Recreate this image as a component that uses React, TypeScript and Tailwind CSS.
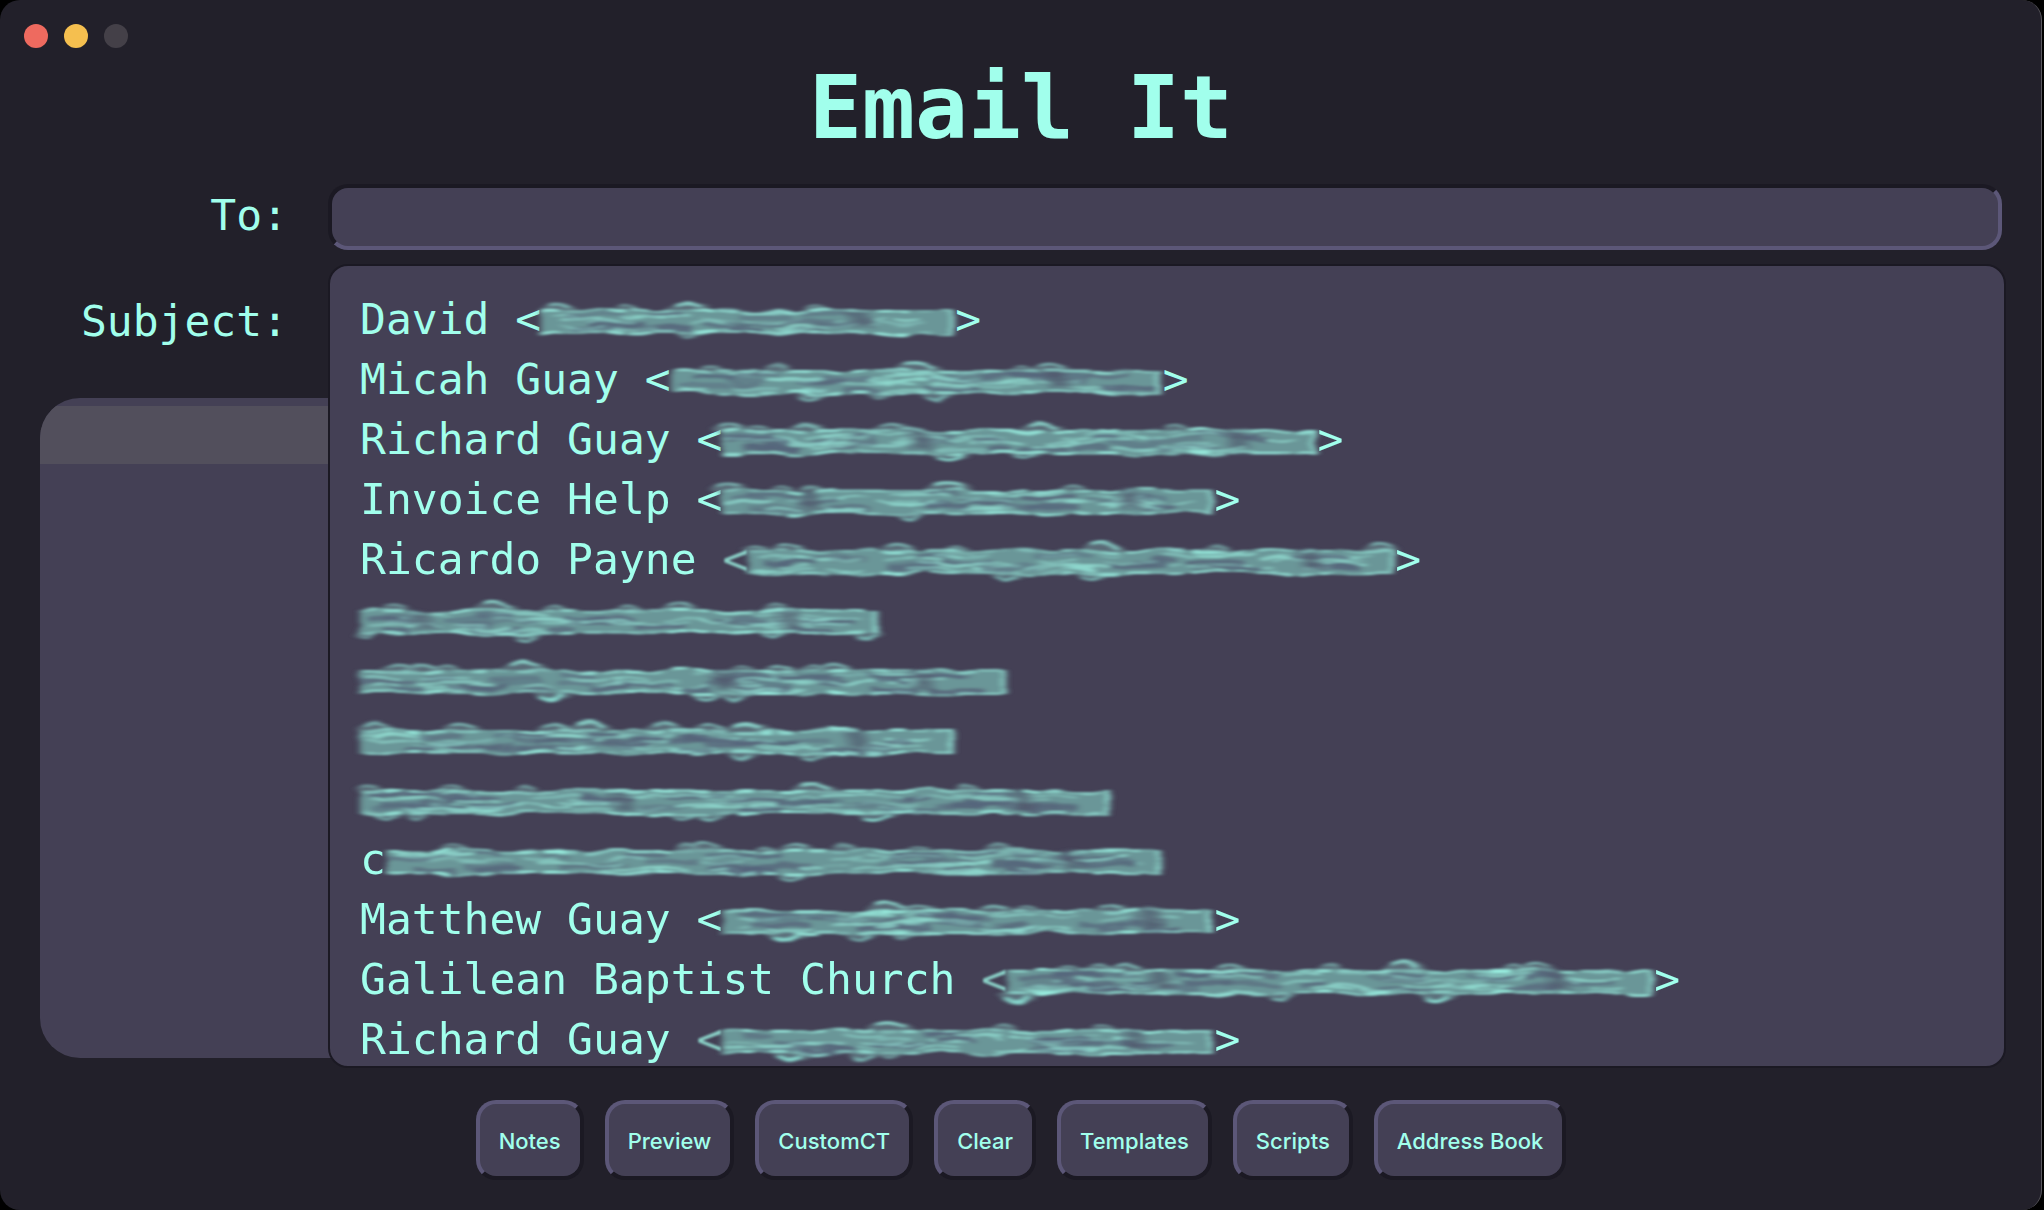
type Smear = {
  /** number of characters covered */
  chars: number;
  /** lumps above the band: [x, strength 1-3] */
  up: [number, number][];
  /** lumps below the band */
  down: [number, number][];
  /** darker breaks in the band */
  gaps: number[];
};

type Contact = {
  name: string;
  open?: 'sharp' | 'soft';
  close?: boolean;
  smear: Smear;
};

const CELL = 25.88;

const contacts: Contact[] = [
  {
    name: 'David ', open: 'sharp', close: true,
    smear: { chars: 16, up: [[20, 2], [86, 1], [147, 3], [274, 1]], down: [[147, 1]], gaps: [316] },
  },
  {
    name: 'Micah Guay ', open: 'sharp', close: true,
    smear: { chars: 19, up: [[39, 1], [106, 1], [248, 3], [352, 1], [381, 2]], down: [[139, 2], [206, 1], [266, 2]], gaps: [384] },
  },
  {
    name: 'Richard Guay ', open: 'sharp', close: true,
    smear: { chars: 23, up: [[8, 2], [37, 1], [85, 2], [169, 2], [321, 3], [454, 1]], down: [[229, 3], [305, 2]], gaps: [194, 512] },
  },
  {
    name: 'Invoice Help ', open: 'sharp', close: true,
    smear: { chars: 19, up: [[5, 2], [62, 1], [89, 1], [227, 3], [351, 1]], down: [[188, 2]], gaps: [85, 405] },
  },
  {
    name: 'Ricardo Payne ', open: 'soft', close: true,
    smear: { chars: 25, up: [[8, 1], [40, 2], [151, 2], [210, 1], [358, 3], [469, 1], [632, 2]], down: [[260, 2], [344, 2]], gaps: [559] },
  },
  {
    name: '',
    smear: { chars: 20, up: [[36, 1], [137, 3], [194, 1], [269, 1], [319, 2], [416, 1]], down: [[7, 1], [168, 2], [414, 2], [506, 2]], gaps: [60, 426] },
  },
  {
    name: '',
    smear: { chars: 25, up: [[39, 2], [64, 2], [87, 1], [164, 3], [382, 1], [422, 2], [453, 1], [474, 2]], down: [[192, 3], [349, 2], [374, 2]], gaps: [362, 560] },
  },
  {
    name: '',
    smear: { chars: 23, up: [[15, 2], [102, 2], [194, 2], [229, 3], [305, 2], [351, 2], [386, 3]], down: [[384, 2], [455, 2]], gaps: [493] },
  },
  {
    name: '',
    smear: { chars: 29, up: [[9, 1], [93, 1], [168, 1], [455, 3], [608, 1]], down: [[26, 2], [56, 1], [324, 2], [351, 2], [520, 3]], gaps: [259, 660] },
  },
  {
    name: 'c',
    smear: { chars: 30, up: [[67, 1], [302, 1], [321, 2], [379, 1], [409, 2], [459, 1], [534, 1], [611, 1]], down: [[406, 2]], gaps: [683] },
  },
  {
    name: 'Matthew Guay ', open: 'sharp', close: true,
    smear: { chars: 19, up: [[168, 3], [197, 2], [273, 2], [306, 1], [388, 2]], down: [[65, 3], [139, 2], [179, 1]], gaps: [426] },
  },
  {
    name: 'Galilean Baptist Church ', open: 'soft', close: true,
    smear: { chars: 25, up: [[61, 1], [94, 1], [119, 2], [222, 2], [324, 1], [396, 3], [507, 1], [530, 2]], down: [[12, 3], [275, 2], [429, 3]], gaps: [150, 547] },
  },
  {
    name: 'Richard Guay ', open: 'soft', close: true,
    smear: { chars: 19, up: [[168, 3], [282, 1], [382, 1]], down: [[70, 3], [141, 2], [166, 1]], gaps: [410] },
  },
];

const actions = ['Notes', 'Preview', 'CustomCT', 'Clear', 'Templates', 'Scripts', 'Address Book'];

function makeRandom(seed: number) {
  let s = seed * 7919 + 13;
  return () => {
    s = (s * 16807) % 2147483647;
    return s / 2147483647;
  };
}

/** A hand-smudged strip hiding an address. */
function Smudge({ smear, seed }: { smear: Smear; seed: number }) {
  const width = Math.round(smear.chars * CELL);
  const rand = makeRandom(seed + 1);
  const streaks = Array.from({ length: Math.round(width / 9) }, () => {
    const x = rand() * (width - 60);
    return {
      x,
      y: 25 + rand() * 17,
      len: 24 + rand() * 36,
      tilt: (rand() - 0.5) * 10,
      light: rand() > 0.45,
      alpha: 0.35 + rand() * 0.5,
    };
  });
  const edges = Array.from({ length: Math.round(width / 22) }, (_, i) => ({
    x: i * 22 + rand() * 6,
    len: 12 + rand() * 14,
    alpha: 0.3 + rand() * 0.7,
    top: rand() * 2,
    bottom: rand() * 2,
  }));
  return (
    <svg
      className="h-[60px] shrink-0 overflow-visible"
      style={{ width }}
      viewBox={`0 0 ${width} 60`}
      role="img"
      aria-label="Hidden address"
    >
      <defs>
        <filter id={`smear-${seed}`} filterUnits="userSpaceOnUse" x="-30" y="-4" width={width + 60} height="68">
          <feTurbulence type="fractalNoise" baseFrequency="0.02 0.05" numOctaves="2" seed={seed + 3} result="noise" />
          <feDisplacementMap in="SourceGraphic" in2="noise" scale="10" xChannelSelector="R" yChannelSelector="G" />
          <feGaussianBlur stdDeviation="3 1" />
        </filter>
      </defs>
      <g filter={`url(#smear-${seed})`}>
        {smear.up.map(([x, k]) => (
          <g key={`u${x}`}>
            <ellipse cx={x} cy={20} rx={8 + k * 5} ry={k + 3} fill="#6f9699" opacity={0.5} />
            <path
              d={`M${x - 5 - k * 3} ${19 - k} q${5 + k * 3} ${-3 - k} ${10 + k * 6} ${k}`}
              fill="none"
              stroke="#8fe0d4"
              strokeWidth={2 + k * 0.4}
              opacity={0.2 + k * 0.22}
            />
          </g>
        ))}
        {smear.down.map(([x, k]) => (
          <g key={`d${x}`}>
            <ellipse cx={x} cy={46} rx={7 + k * 4} ry={k + 2} fill="#6f9699" opacity={0.55} />
            <path
              d={`M${x - 4 - k * 3} ${46 + k} q${4 + k * 3} ${4 + k} ${8 + k * 5} ${-k}`}
              fill="none"
              stroke="#8fe8da"
              strokeWidth={2 + k * 0.4}
              opacity={0.15 + k * 0.24}
            />
          </g>
        ))}
        <rect x={0} y={21} width={width - 2} height={24} fill="#6b9698" />
        {streaks.map((s, i) => (
          <path
            key={i}
            d={`M${s.x} ${s.y} q${s.len / 2} ${s.tilt} ${s.len} 0`}
            fill="none"
            stroke={s.light ? '#93e0d4' : '#56657a'}
            strokeWidth={s.light ? 2 : 5}
            opacity={s.alpha}
          />
        ))}
        {smear.gaps.map((x) => (
          <g key={x} fill="#50566a">
            <path d={`M${x - 16} 21 h28 l8 20 h-26 z`} opacity={0.3} />
            <path d={`M${x - 8} 19 h14 l6 20 h-12 z`} opacity={0.45} />
          </g>
        ))}
        {edges.map((e, i) => (
          <g key={i} stroke="#9af0e2" strokeWidth={2.4} opacity={e.alpha}>
            <path d={`M${e.x} ${21 + e.top} h${Math.max(0, Math.min(e.len, width - e.x - 3))}`} />
            <path d={`M${e.x} ${43 + e.bottom} h${Math.max(0, Math.min(e.len, width - e.x - 3))}`} />
          </g>
        ))}
        <path d={`M${width - 3} 21 v24`} stroke="#9af0e2" strokeWidth={3} />
      </g>
    </svg>
  );
}

function ContactRow({ contact, index }: { contact: Contact; index: number }) {
  return (
    <li>
      <button type="button" className="flex h-[60px] w-full items-center whitespace-pre text-left leading-[60px]">
        {contact.name && <span>{contact.name}</span>}
        {contact.open && <span className={contact.open === 'soft' ? 'opacity-75 blur-[1px]' : ''}>&lt;</span>}
        <Smudge smear={contact.smear} seed={index} />
        {contact.close && <span>&gt;</span>}
      </button>
    </li>
  );
}

const fieldClass =
  'h-[66px] w-full rounded-[20px] border-4 border-t-[#1b1923] border-l-[#1b1923] border-r-[#5c5778] border-b-[#5c5778] bg-[#444055] px-5 text-[43px] text-[#a1ffec] outline-none';

export default function App() {
  return (
    <div className="min-h-screen bg-black pr-[2px]">
      <main className="flex min-h-screen flex-col rounded-[20px] border-r border-[#5a585f] bg-[#22202a] pt-6 pr-[39px] pb-[30px] pl-10 font-['DejaVu_Sans_Mono',monospace] text-[43px] text-[#a1ffec]">
        <div className="-ml-4 flex gap-4">
          <button type="button" aria-label="Close" className="size-6 rounded-full bg-[#ee6a5f]" />
          <button type="button" aria-label="Minimize" className="size-6 rounded-full bg-[#f5bf4f]" />
          <button type="button" aria-label="Zoom" disabled className="size-6 rounded-full bg-[#444048]" />
        </div>

        <h1 className="mt-4 text-center text-[88px] leading-none font-bold">Email It</h1>

        <form className="mt-8 flex grow flex-col" onSubmit={(e) => e.preventDefault()}>
          <div className="grid grid-cols-[248px_1fr] items-center gap-x-10 gap-y-10">
            <label htmlFor="to" className="pb-1 text-right leading-none">To:</label>
            <div className="relative z-10">
              <input id="to" type="text" autoComplete="off" className={`block ${fieldClass}`} />
              <ul
                aria-label="Suggestions"
                className="absolute top-full -right-1 left-0 mt-[14px] max-h-[804px] overflow-hidden rounded-[20px] border-2 border-[#1b1923] bg-[#444055] pt-[23px] pl-[30px]"
              >
                {contacts.map((c, i) => (
                  <ContactRow key={i} contact={c} index={i} />
                ))}
              </ul>
            </div>
            <label htmlFor="subject" className="pb-1 text-right leading-none">Subject:</label>
            <input id="subject" type="text" className={`block ${fieldClass}`} />
          </div>

          <div className="mt-[42px] flex grow flex-col overflow-hidden rounded-[40px] bg-[#444055] pt-2">
            <div className="h-[58px] bg-[#524f5c]" />
            <textarea aria-label="Message" className="w-full grow resize-none bg-transparent px-10 outline-none" />
          </div>

          <div className="mt-[42px] flex justify-center gap-[21px]">
            {actions.map((label) => (
              <button
                key={label}
                type="button"
                className="h-20 rounded-[20px] border-4 border-t-[#5c5778] border-l-[#5c5778] border-r-[#1b1923] border-b-[#1b1923] bg-[#444055] px-[19px] pt-[2px] font-[Inter,sans-serif] text-[22px] font-medium"
              >
                {label}
              </button>
            ))}
          </div>
        </form>
      </main>
    </div>
  );
}
